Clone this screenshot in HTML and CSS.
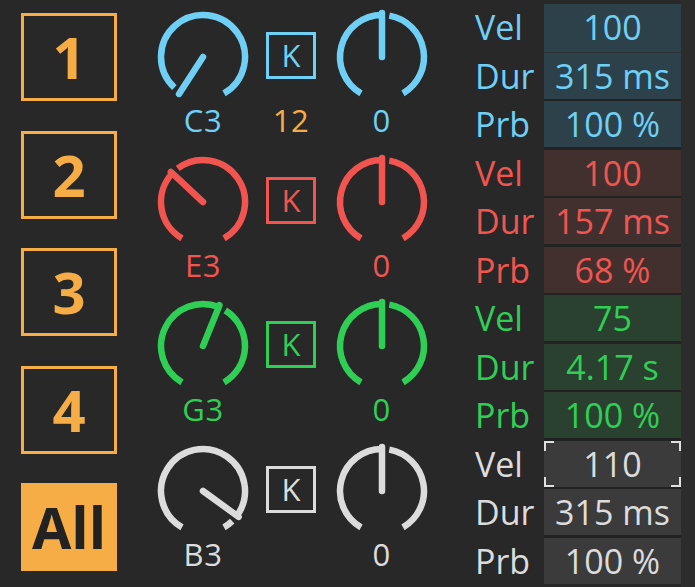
FILE: index.html
```html
<!DOCTYPE html>
<html>
<head>
<meta charset="utf-8">
<link rel="stylesheet" href="styles.css">
</head>
<body>
<div class="app">
  <div class="pads">
    <div class="pad">1</div>
    <div class="pad">2</div>
    <div class="pad">3</div>
    <div class="pad">4</div>
    <div class="pad all">All</div>
  </div>

  <div class="strips">
    <div class="strip blue">
      <div class="knob-col">
        <svg class="knob" width="96" height="96" viewBox="0 0 96 96">
          <path d="M27 84.37 A42 42 0 0 1 25.13 83.22"/>
          <path d="M19.36 78.72 A42 42 0 1 1 69 84.37"/>
          <line x1="48" y1="48" x2="24.04" y2="84.9"/>
        </svg>
        <div class="lab">C3</div>
      </div>
      <div class="k-col">
        <div class="k-wrap"><div class="kbox">K</div></div>
        <div class="lab orange">12</div>
      </div>
      <div class="knob-col second">
        <svg class="knob" width="96" height="96" viewBox="0 0 96 96">
          <path d="M27 84.37 A42 42 0 0 1 48 6"/>
          <path d="M55.29 6.64 A42 42 0 0 1 69 84.37"/>
          <line x1="48" y1="48" x2="48" y2="4"/>
        </svg>
        <div class="lab">0</div>
      </div>
    </div>

    <div class="strip red">
      <div class="knob-col">
        <svg class="knob" width="96" height="96" viewBox="0 0 96 96">
          <path d="M27 84.37 A42 42 0 0 1 17.28 19.36"/>
          <path d="M22.72 14.46 A42 42 0 1 1 69 84.37"/>
          <line x1="48" y1="48" x2="15.82" y2="17.99"/>
        </svg>
        <div class="lab">E3</div>
      </div>
      <div class="k-col">
        <div class="k-wrap"><div class="kbox">K</div></div>
        <div class="lab"></div>
      </div>
      <div class="knob-col second">
        <svg class="knob" width="96" height="96" viewBox="0 0 96 96">
          <path d="M27 84.37 A42 42 0 0 1 48 6"/>
          <path d="M55.29 6.64 A42 42 0 0 1 69 84.37"/>
          <line x1="48" y1="48" x2="48" y2="4"/>
        </svg>
        <div class="lab">0</div>
      </div>
    </div>

    <div class="strip green">
      <div class="knob-col">
        <svg class="knob" width="96" height="96" viewBox="0 0 96 96">
          <path d="M27 84.37 A42 42 0 0 1 63.73 9.06"/>
          <path d="M70.26 12.38 A42 42 0 0 1 69 84.37"/>
          <line x1="48" y1="48" x2="64.48" y2="7.2"/>
        </svg>
        <div class="lab">G3</div>
      </div>
      <div class="k-col">
        <div class="k-wrap"><div class="kbox">K</div></div>
        <div class="lab"></div>
      </div>
      <div class="knob-col second">
        <svg class="knob" width="96" height="96" viewBox="0 0 96 96">
          <path d="M27 84.37 A42 42 0 0 1 48 6"/>
          <path d="M55.29 6.64 A42 42 0 0 1 69 84.37"/>
          <line x1="48" y1="48" x2="48" y2="4"/>
        </svg>
        <div class="lab">0</div>
      </div>
    </div>

    <div class="strip grey">
      <div class="knob-col">
        <svg class="knob" width="96" height="96" viewBox="0 0 96 96">
          <path d="M27 84.37 A42 42 0 1 1 81.98 72.69"/>
          <path d="M77.18 78.21 A42 42 0 0 1 69 84.37"/>
          <line x1="48" y1="48" x2="83.6" y2="73.86"/>
        </svg>
        <div class="lab">B3</div>
      </div>
      <div class="k-col">
        <div class="k-wrap"><div class="kbox">K</div></div>
        <div class="lab"></div>
      </div>
      <div class="knob-col second">
        <svg class="knob" width="96" height="96" viewBox="0 0 96 96">
          <path d="M27 84.37 A42 42 0 0 1 48 6"/>
          <path d="M55.29 6.64 A42 42 0 0 1 69 84.37"/>
          <line x1="48" y1="48" x2="48" y2="4"/>
        </svg>
        <div class="lab">0</div>
      </div>
    </div>
  </div>

  <div class="params">
    <div class="labels">
      <div class="pl blue">Vel</div>
      <div class="pl blue">Dur</div>
      <div class="pl blue">Prb</div>
      <div class="pl red">Vel</div>
      <div class="pl red">Dur</div>
      <div class="pl red">Prb</div>
      <div class="pl green">Vel</div>
      <div class="pl green">Dur</div>
      <div class="pl green">Prb</div>
      <div class="pl grey">Vel</div>
      <div class="pl grey">Dur</div>
      <div class="pl grey">Prb</div>
    </div>
    <div class="values">
      <div class="val blue joined">100</div>
      <div class="val blue">315 ms</div>
      <div class="val blue">100 %</div>
      <div class="val red">100</div>
      <div class="val red">157 ms</div>
      <div class="val red">68 %</div>
      <div class="val green">75</div>
      <div class="val green">4.17 s</div>
      <div class="val green">100 %</div>
      <div class="val grey focus">110
        <span class="c tl"></span><span class="c tr"></span><span class="c bl"></span><span class="c br"></span>
      </div>
      <div class="val grey">315 ms</div>
      <div class="val grey">100 %</div>
    </div>
    <div class="edge"></div>
  </div>
</div>
</body>
</html>
```
FILE: styles.css
```css
html, body {
  margin: 0;
  padding: 0;
  background: #282828;
}
body {
  font-family: "Open Sans", "Noto Sans", sans-serif;
  width: 695px;
  height: 587px;
  overflow: hidden;
}
.app {
  display: flex;
  width: 695px;
  height: 587px;
}

.blue { color: #6fcff5; }
.red { color: #f2554f; }
.green { color: #2fcf55; }
.grey { color: #dcdcdc; }
.orange { color: #f7ad45; }

/* pads */
.pads {
  display: flex;
  flex-direction: column;
  gap: 29.5px;
  padding: 13px 0 0 21px;
  width: 96px;
  flex: none;
}
.pad {
  box-sizing: border-box;
  width: 96px;
  height: 88px;
  border: 3px solid #f7ad45;
  color: #f7ad45;
  font-weight: 700;
  font-size: 58px;
  line-height: 1;
  display: flex;
  align-items: center;
  justify-content: center;
}
.pad.all {
  background: #f7ad45;
  color: #222222;
  font-size: 57px;
}

/* strips */
.strips {
  margin-left: 38px;
  padding-top: 9px;
  display: flex;
  flex-direction: column;
  flex: none;
}
.strip {
  height: 146.5px;
  display: flex;
}
.knob-col {
  width: 96px;
  display: flex;
  flex-direction: column;
  align-items: center;
}
.knob-col.second {
  margin-left: 17.5px;
}
.knob {
  display: block;
  fill: none;
  stroke: currentColor;
  stroke-width: 6.5;
}
.knob line {
  stroke-linecap: round;
}
.lab {
  font-size: 31px;
  line-height: 30px;
  height: 30px;
  text-align: center;
  letter-spacing: 0.5px;
}
.k-col {
  width: 50px;
  margin-left: 15px;
  display: flex;
  flex-direction: column;
  align-items: center;
}
.k-wrap {
  height: 96px;
  display: flex;
  align-items: center;
}
.kbox {
  box-sizing: border-box;
  width: 50px;
  height: 47px;
  margin-top: -3px;
  border: 3px solid currentColor;
  font-size: 31px;
  line-height: 1;
  display: flex;
  align-items: center;
  justify-content: center;
}

/* params */
.params {
  display: flex;
  margin-left: 45.5px;
  flex: 1;
}
.labels, .values {
  display: flex;
  flex-direction: column;
  gap: 2.5px;
  padding-top: 4px;
}
.labels {
  width: 69px;
}
.pl {
  height: 46px;
  font-size: 34px;
  line-height: 1;
  display: flex;
  align-items: center;
}
.values {
  width: 137px;
}
.val {
  position: relative;
  height: 46px;
  font-size: 34px;
  line-height: 1;
  display: flex;
  align-items: center;
  justify-content: center;
}
.val.blue { background: #2c414a; }
.val.blue.joined { box-shadow: 0 2.5px 0 #2c414a; }
.val.red { background: #42302f; }
.val.green { background: #2b4130; }
.val.grey { background: #3b3b3b; }
.values {
  background: #222222;
  background-clip: content-box;
  height: 579.5px;
}
.edge {
  flex: 1;
  background: #2c2c2c;
}

.c {
  position: absolute;
  width: 8px;
  height: 8px;
  border: 0 solid #e0e0e0;
}
.c.tl { left: 0; top: 0; border-left-width: 2.5px; border-top-width: 2.5px; }
.c.tr { right: 0; top: 0; border-right-width: 2.5px; border-top-width: 2.5px; }
.c.bl { left: 0; bottom: 0; border-left-width: 2.5px; border-bottom-width: 2.5px; }
.c.br { right: 0; bottom: 0; border-right-width: 2.5px; border-bottom-width: 2.5px; }
```
